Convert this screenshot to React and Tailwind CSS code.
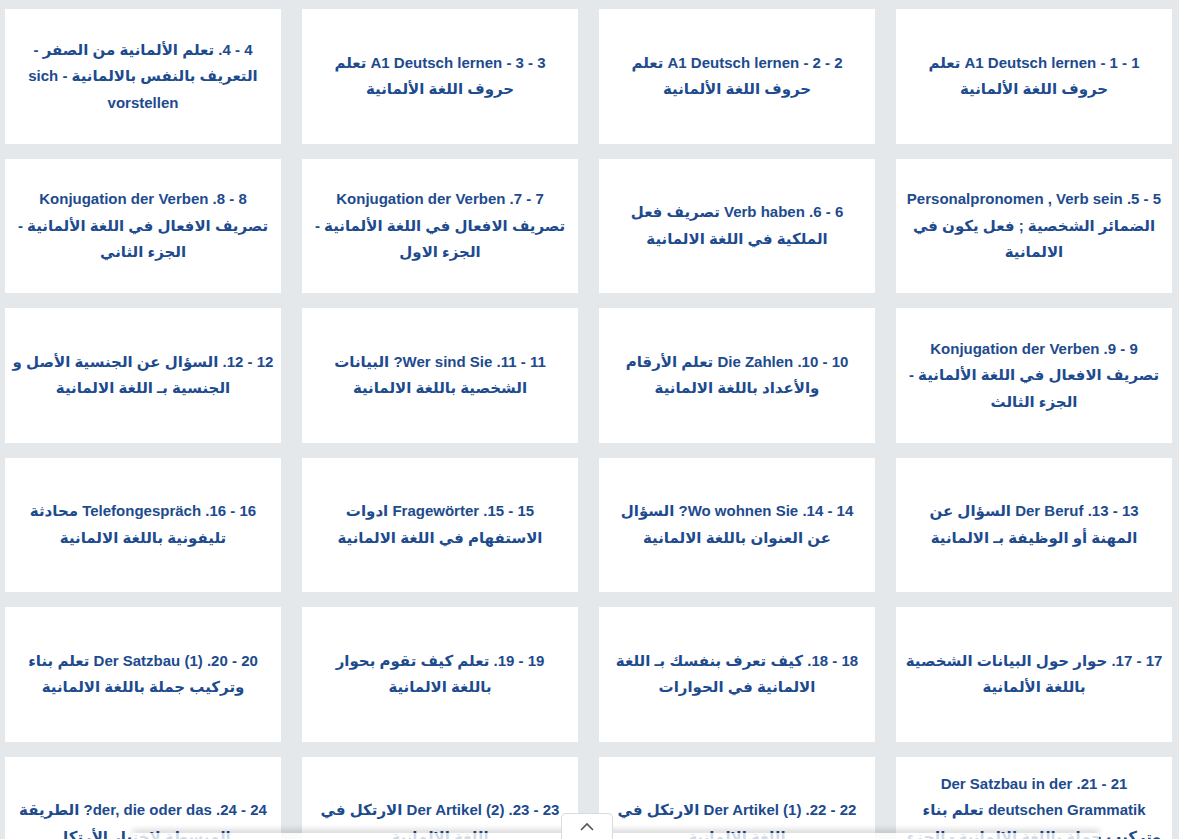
const lessons = [
  ["1 - 1 - A1 Deutsch lernen تعلم", "حروف اللغة الألمانية"],
  ["2 - 2 - A1 Deutsch lernen تعلم", "حروف اللغة الألمانية"],
  ["3 - 3 - A1 Deutsch lernen تعلم", "حروف اللغة الألمانية"],
  ["4 - 4. تعلم الألمانية من الصفر -", "التعريف بالنفس بالالمانية - sich", "vorstellen"],
  ["5 - 5. Personalpronomen , Verb sein", "الضمائر الشخصية ; فعل يكون في", "الالمانية"],
  ["6 - 6. Verb haben تصريف فعل", "الملكية في اللغة الالمانية"],
  ["7 - 7. Konjugation der Verben", "تصريف الافعال في اللغة الألمانية -", "الجزء الاول"],
  ["8 - 8. Konjugation der Verben", "تصريف الافعال في اللغة الألمانية -", "الجزء الثاني"],
  ["9 - 9. Konjugation der Verben", "تصريف الافعال في اللغة الألمانية -", "الجزء الثالث"],
  ["10 - 10. Die Zahlen تعلم الأرقام", "والأعداد باللغة الالمانية"],
  ["11 - 11. Wer sind Sie? البيانات", "الشخصية باللغة الالمانية"],
  ["12 - 12. السؤال عن الجنسية الأصل و", "الجنسية بـ اللغة الالمانية"],
  ["13 - 13. Der Beruf السؤال عن", "المهنة أو الوظيفة بـ الالمانية"],
  ["14 - 14. Wo wohnen Sie? السؤال", "عن العنوان باللغة الالمانية"],
  ["15 - 15. Fragewörter ادوات", "الاستفهام في اللغة الالمانية"],
  ["16 - 16. Telefongespräch محادثة", "تليفونية باللغة الالمانية"],
  ["17 - 17. حوار حول البيانات الشخصية", "باللغة الألمانية"],
  ["18 - 18. كيف تعرف بنفسك بـ اللغة", "الالمانية في الحوارات"],
  ["19 - 19. تعلم كيف تقوم بحوار", "باللغة الالمانية"],
  ["20 - 20. Der Satzbau (1) تعلم بناء", "وتركيب جملة باللغة الالمانية"],
  ["21 - 21. Der Satzbau in der", "deutschen Grammatik تعلم بناء", "وتركيب جملة باللغة الالمانية - الجزء", "الثاني"],
  ["22 - 22. Der Artikel (1) الارتكل في", "اللغة الالمانية"],
  ["23 - 23. Der Artikel (2) الارتكل في", "اللغة الالمانية"],
  ["24 - 24. der, die oder das? الطريقة", "المبسطة لاختيار الأرتكل"],
]

export default function App() {
  return (
    <div className="h-[839px] overflow-hidden bg-[#e4e8eb] font-['Liberation_Sans','DejaVu_Sans',sans-serif]">
      <div dir="rtl" className="grid grid-cols-4 gap-x-[21px] gap-y-[15px] pt-[9px] pr-[7px] pl-[5px]">
        {lessons.map((lines, i) => (
          <a
            key={i}
            href="#"
            className="h-[134.5px] bg-white flex flex-col items-center justify-center text-center"
          >
            {lines.map((line, j) => (
              <span key={j} className="block whitespace-nowrap text-[15px] leading-[26.5px] font-bold text-[#1d4b8e]">
                {line}
              </span>
            ))}
          </a>
        ))}
      </div>

      {/* bottom bar peeking in */}
      <div className="fixed bottom-0 left-[133px] right-[80px] h-[6px] bg-white/80 shadow-[0_-3px_6px_rgba(0,0,0,0.18)]"></div>
      <button className="fixed bottom-0 left-[561px] w-[52px] h-[26px] bg-white border border-b-0 border-[#d9dcde] rounded-t-[5px] flex items-center justify-center">
        <svg width="16" height="10" viewBox="0 0 16 10" fill="none" stroke="#555" strokeWidth="1.6">
          <path d="M2 8 L8 2 L14 8" />
        </svg>
      </button>
    </div>
  )
}
